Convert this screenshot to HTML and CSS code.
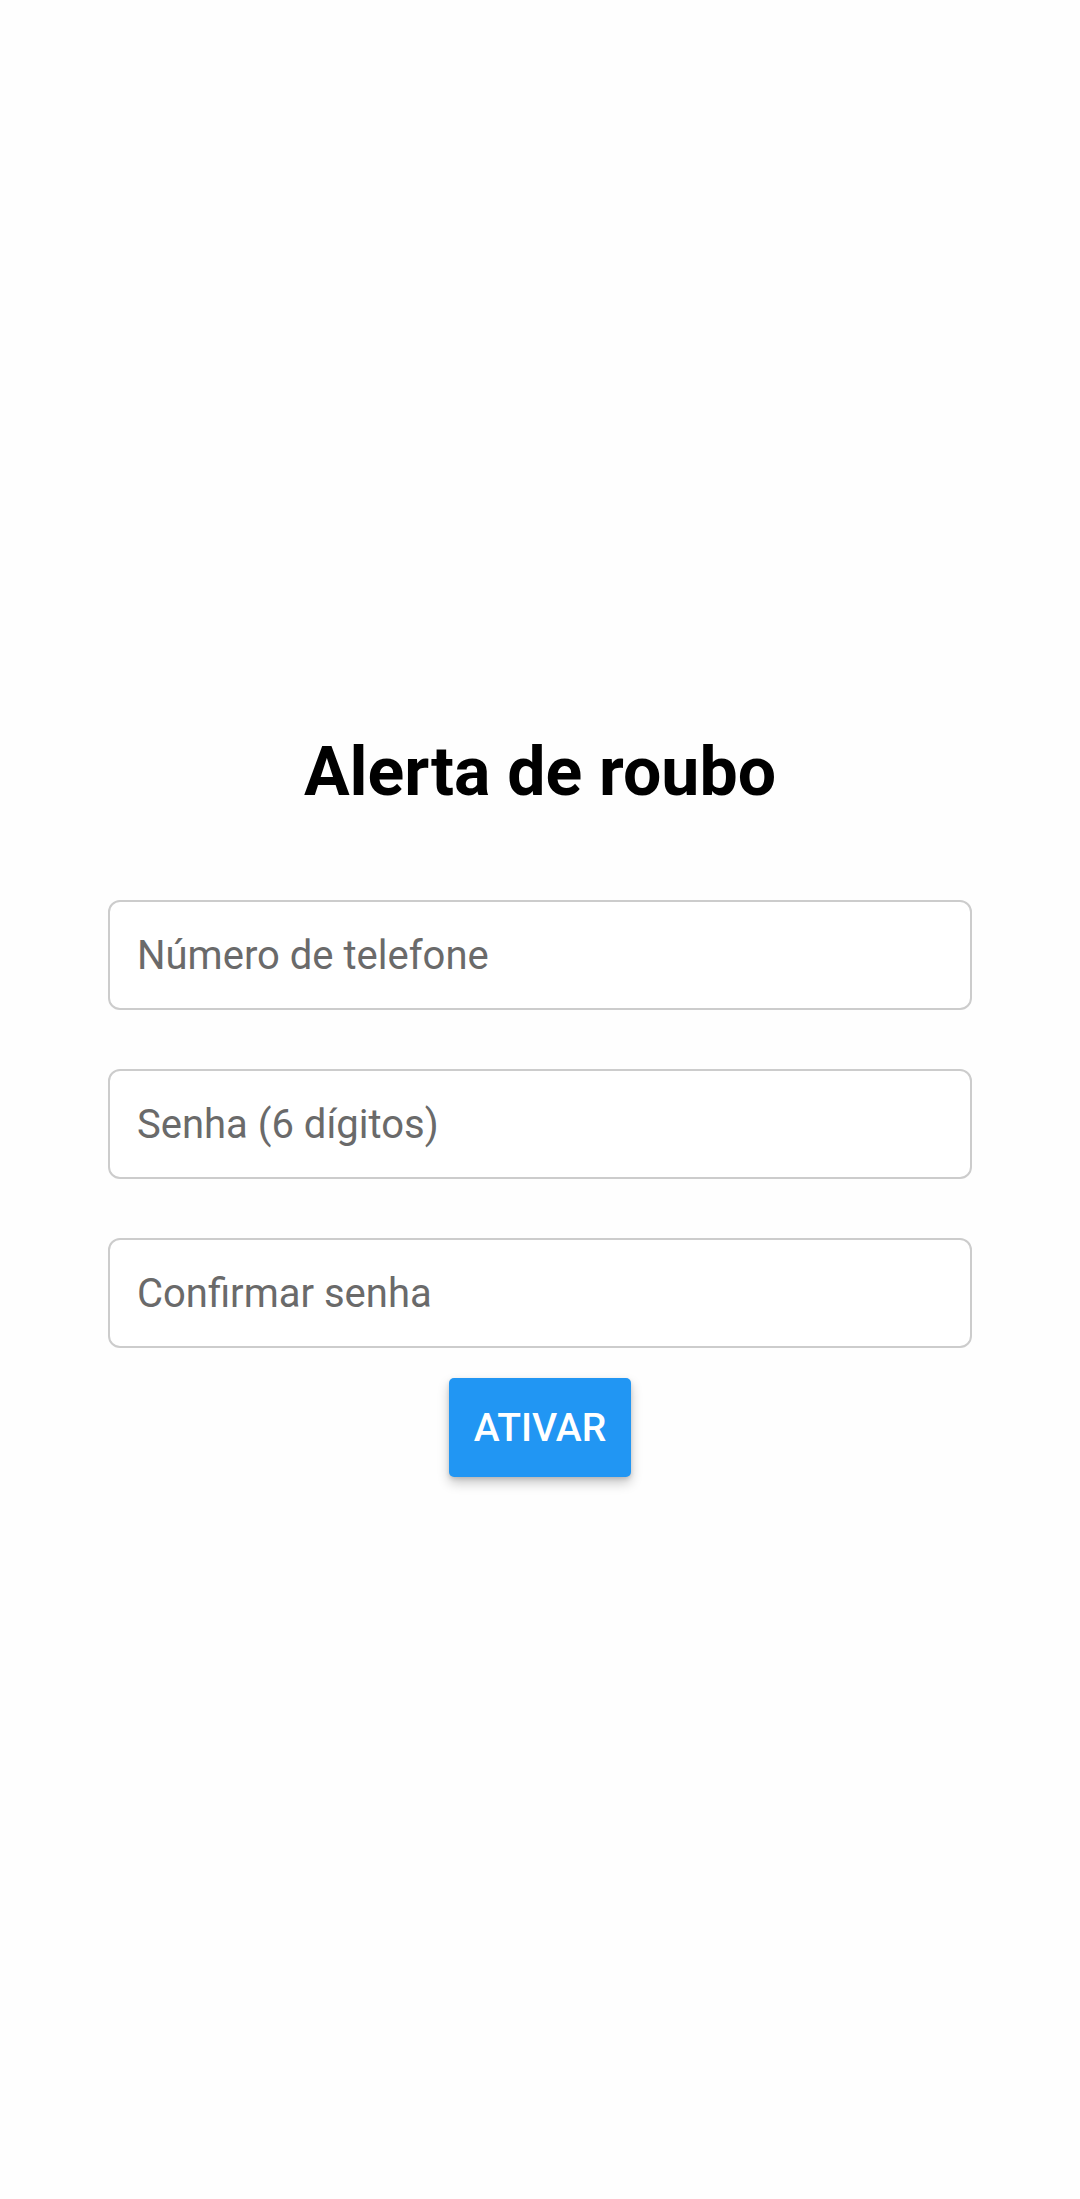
FILE: index.html
```html
<!DOCTYPE html>
<html lang="pt">
<head>
<meta charset="utf-8">
<title>Alerta de roubo</title>
<link rel="stylesheet" href="styles.css">
</head>
<body>
<main class="screen">
  <h1 class="title">Alerta de roubo</h1>
  <form class="form">
    <input class="field" type="tel" placeholder="Número de telefone">
    <input class="field" type="password" placeholder="Senha (6 dígitos)">
    <input class="field" type="password" placeholder="Confirmar senha">
    <button class="btn" type="button">ATIVAR</button>
  </form>
</main>
</body>
</html>
```
FILE: styles.css
```css
html, body {
  margin: 0;
  padding: 0;
  background: #fefefe;
}
body {
  width: 1080px;
  height: 2199px;
  font-family: Roboto, "Noto Sans", sans-serif;
}
.screen {
  display: flex;
  flex-direction: column;
  align-items: center;
  padding-top: 730px;
}
.title {
  margin: 0;
  font-size: 68px;
  font-weight: 700;
  line-height: 84px;
  color: #000;
}
.form {
  margin-top: 86px;
  display: flex;
  flex-direction: column;
  align-items: center;
  width: 864px;
}
.field {
  box-sizing: border-box;
  width: 864px;
  height: 110px;
  margin-bottom: 59px;
  border: 2px solid #cccccc;
  border-radius: 12px;
  padding: 0 27px;
  font-family: Roboto, "Noto Sans", sans-serif;
  font-size: 40px;
  color: #333;
  background: #fff;
  outline: none;
}
.field:last-of-type {
  margin-bottom: 30px;
}
.field::placeholder {
  color: #6a6a6a;
}
.btn {
  width: 182px;
  height: 99px;
  border: none;
  border-radius: 5px;
  background: #2196f3;
  color: #fff;
  font-family: Roboto, "Noto Sans", sans-serif;
  font-size: 39px;
  font-weight: 500;
  padding: 0;
  box-shadow: 0 6px 12px rgba(0,0,0,0.22), 0 2px 4px rgba(0,0,0,0.12);
}
```
